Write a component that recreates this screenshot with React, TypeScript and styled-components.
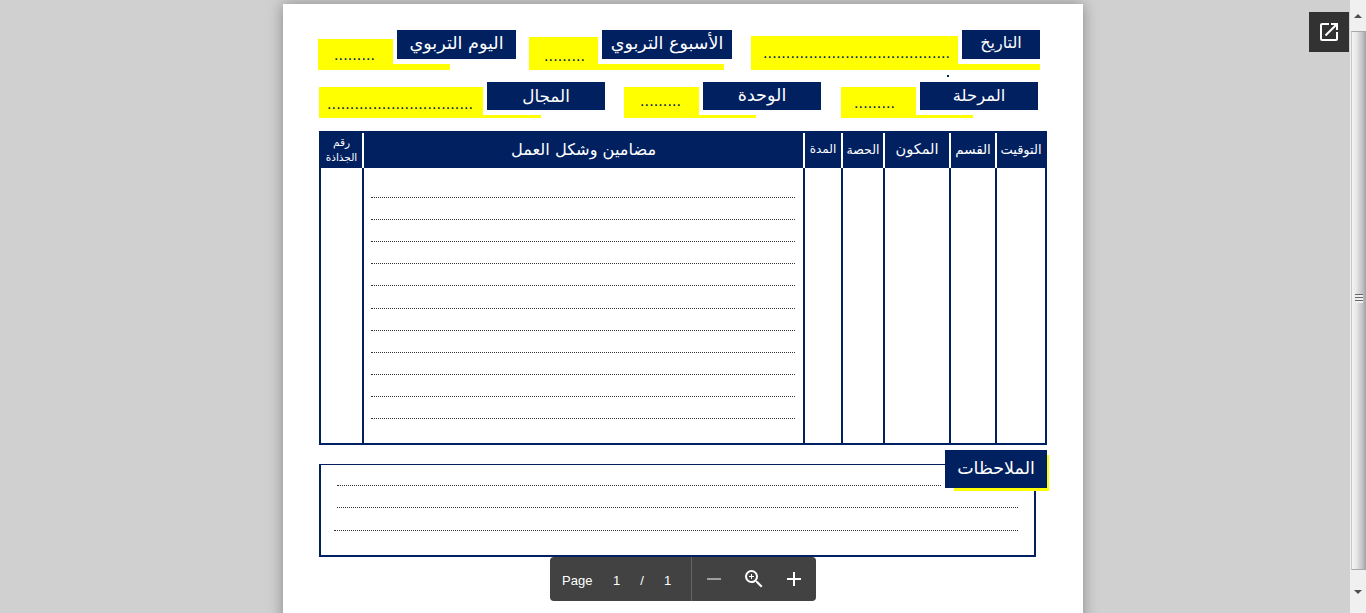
import { createGlobalStyle } from 'styled-components';
import styled from 'styled-components';
import { MdAdd, MdOpenInNew, MdRemove, MdZoomIn } from 'react-icons/md';

const navy = '#002060';
const yellow = '#ffff00';
const arabic = '"DejaVu Sans", sans-serif';

const GlobalStyle = createGlobalStyle`
  html, body {
    margin: 0;
    padding: 0;
    height: 613px;
    overflow: hidden;
    background: #d0d0d0;
  }
`

const Viewer = styled.div`
  position: relative;
  display: flex;
  width: 1366px;
  height: 613px;
  overflow: hidden;
  background: #d0d0d0;
`

const Canvas = styled.main`
  flex: 1;
  display: flex;
  justify-content: center;
  padding: 4px 0 0 16px;
`

const Page = styled.div`
  width: 800px;
  height: 760px;
  padding: 26px 0 0 35px;
  box-sizing: border-box;
  background: #fff;
  box-shadow: 0 0 14px rgba(0, 0, 0, .35);
  flex-shrink: 0;
`

const Row = styled.div<{ $height: number; $left?: number; $top: number }>`
  display: flex;
  height: ${p => p.$height}px;
  margin-top: ${p => p.$top}px;
  margin-left: ${p => p.$left || 0}px;
`

const Field = styled.div<{ $width: number; $after: number }>`
  position: relative;
  display: flex;
  align-items: flex-end;
  flex-shrink: 0;
  width: ${p => p.$width}px;
  margin-right: ${p => p.$after}px;
`

const Fill = styled.div<{ $width: number; $height: number; $inset: number; $lift: number }>`
  display: flex;
  align-items: flex-end;
  box-sizing: border-box;
  flex-shrink: 0;
  width: ${p => p.$width}px;
  height: ${p => p.$height}px;
  padding: 0 0 ${p => p.$lift}px ${p => p.$inset}px;
  background: ${yellow};
`

const Dots = styled.span`
  font: 16px/16px "Liberation Sans", sans-serif;
  letter-spacing: .12px;
  color: ${navy};
  white-space: nowrap;
`

const Side = styled.div`
  flex: 1;
  display: flex;
  flex-direction: column;
  justify-content: space-between;
  height: 100%;
  min-width: 0;
`

const Label = styled.div<{ $width: number; $height: number; $size: number; $raise: number }>`
  display: flex;
  align-items: center;
  justify-content: center;
  flex-shrink: 0;
  box-sizing: border-box;
  width: ${p => p.$width}px;
  height: ${p => p.$height}px;
  margin-left: 4px;
  padding-bottom: ${p => p.$raise}px;
  background: ${navy};
  color: #fff;
  font: ${p => p.$size}px/1 ${arabic};
`

const Strip = styled.div<{ $width: number; $thick: number }>`
  width: ${p => p.$width}px;
  height: ${p => p.$thick}px;
  background: ${yellow};
`

const Speck = styled.i`
  position: absolute;
  left: 196px;
  top: 45px;
  width: 2px;
  height: 2px;
  background: ${navy};
`

const Table = styled.section`
  display: grid;
  grid-template-columns: 43px 441px 38px 42px 66px 46px 48px;
  grid-template-rows: 35px 275px;
  box-sizing: border-box;
  width: 728px;
  height: 314px;
  margin: 13px 0 0 1px;
  border: 2px solid ${navy};
`

const HeadCell = styled.div<{ $size: number; $last?: boolean }>`
  display: flex;
  align-items: center;
  justify-content: center;
  padding-bottom: 1px;
  text-align: center;
  background: ${navy};
  color: #fff;
  font: ${p => p.$size}px/1.45 ${arabic};
  white-space: nowrap;
  border-right: ${p => (p.$last ? 0 : '2px solid #fff')};
  box-sizing: border-box;
`

const BodyCell = styled.div<{ $last?: boolean }>`
  border-right: ${p => (p.$last ? 0 : `2px solid ${navy}`)};
  box-sizing: border-box;
`

const Lines = styled.div`
  padding: 7.4px 8px 0 7px;
`

const DottedLine = styled.div`
  height: 21.2px;
  border-bottom: 1px dotted #333;
`

const Notes = styled.section`
  position: relative;
  isolation: isolate;
  box-sizing: border-box;
  width: 717px;
  height: 93px;
  margin: 19px 0 0 1px;
  border: 2px solid ${navy};
  border-top-width: 1px;
`

const NotesTag = styled.h2`
  position: absolute;
  right: -13px;
  top: -15px;
  display: flex;
  align-items: center;
  justify-content: center;
  width: 102px;
  height: 38px;
  margin: 0;
  background: ${navy};
  color: #fff;
  font: 400 17.5px/1 ${arabic};

  &::before {
    content: '';
    position: absolute;
    z-index: -1;
    left: 9px;
    right: -2px;
    top: 5px;
    bottom: -3px;
    background: ${yellow};
  }
`

const NoteLine = styled.div<{ $left: number; $right: number; $height: number }>`
  height: ${p => p.$height}px;
  margin: 0 ${p => p.$right}px 0 ${p => p.$left}px;
  border-bottom: 1px dotted #333;
`

const Toolbar = styled.nav`
  position: absolute;
  left: 550px;
  top: 557px;
  display: flex;
  align-items: center;
  width: 266px;
  height: 44px;
  background: #424242;
  border-radius: 4px;
  color: #fff;
  font: 13px "Liberation Sans", sans-serif;
`

const PageInfo = styled.div`
  display: grid;
  grid-template-columns: 42px 25px 26px 25px;
  align-items: center;
  justify-items: center;
  box-sizing: border-box;
  width: 142px;
  height: 100%;
  padding: 2px 0 0 12px;
  border-right: 1px solid #666;
  span:first-child { justify-self: start; }
`

const ToolButton = styled.button<{ $dim?: boolean }>`
  display: flex;
  align-items: center;
  justify-content: center;
  width: 40px;
  height: 44px;
  padding: 0;
  border: 0;
  background: none;
  color: ${p => (p.$dim ? '#a0a0a0' : '#fff')};
  font-size: 24px;
`

const ToolIcons = styled.div`
  display: flex;
  padding-left: 2px;
`

const OpenButton = styled.button`
  position: absolute;
  left: 1309px;
  top: 12px;
  display: flex;
  align-items: center;
  justify-content: center;
  width: 40px;
  height: 40px;
  padding: 0;
  border: 0;
  background: #323232;
  color: #fff;
  font-size: 24px;
`

const Scrollbar = styled.aside`
  display: flex;
  flex-direction: column;
  flex-shrink: 0;
  width: 16px;
  height: 100%;
  background: #f0f0f0;
`

const ArrowBox = styled.div<{ $height: number }>`
  display: flex;
  align-items: center;
  justify-content: center;
  height: ${p => p.$height}px;
`

const Arrow = styled.i<{ $down?: boolean }>`
  width: 0;
  height: 0;
  border-left: 4px solid transparent;
  border-right: 4px solid transparent;
  border-${p => (p.$down ? 'top' : 'bottom')}: 4px solid #505050;
`

const Thumb = styled.div`
  flex: 1;
  display: flex;
  align-items: center;
  justify-content: center;
  box-sizing: border-box;
  margin-left: 1px;
  border: 1px solid #a8a8a8;
  border-left-color: #c8c8c8;
  background: linear-gradient(90deg, #f4f4f4 0%, #e6e6e6 35%, #bcbcc4 85%, #a8a8a8 100%);
`

const Grip = styled.i`
  width: 8px;
  height: 9px;
  margin-bottom: 5px;
  background: repeating-linear-gradient(180deg, #666 0 1px, #eee 1px 3px);
`

const topRow = [
  { width: 198, after: 13, fill: 75, fillHeight: 31, inset: 16, lift: 7, dots: 9, label: 'اليوم التربوي', size: 17.6, raise: 2, labelWidth: 119, strip: 57 },
  { width: 204, after: 18, fill: 69, fillHeight: 33, inset: 15, lift: 6, dots: 9, label: 'الأسبوع التربوي', size: 17.5, raise: 2, labelWidth: 130, strip: 126 },
  { width: 290, after: 0, fill: 207, fillHeight: 34, inset: 12, lift: 9, dots: 41, label: 'التاريخ', size: 16, raise: 4, labelWidth: 78, strip: 82 },
]

const bottomRow = [
  { width: 287, after: 18, fill: 164, fillHeight: 31, inset: 8, lift: 6, dots: 32, label: 'المجال', size: 16.8, raise: 0, labelWidth: 118, strip: 58 },
  { width: 198, after: 19, fill: 75, fillHeight: 31, inset: 16, lift: 9, dots: 9, label: 'الوحدة', size: 17.6, raise: 0, labelWidth: 118, strip: 57 },
  { width: 197, after: 0, fill: 75, fillHeight: 31, inset: 13, lift: 7, dots: 9, label: 'المرحلة', size: 16.4, raise: 0, labelWidth: 118, strip: 57 },
]

const heads = [
  { text: <>رقم<br />الجذاذة</>, size: 10.5 },
  { text: 'مضامين وشكل العمل', size: 16.2 },
  { text: 'المدة', size: 12 },
  { text: 'الحصة', size: 12.5 },
  { text: 'المكون', size: 14.5 },
  { text: 'القسم', size: 13.5 },
  { text: 'التوقيت', size: 13 },
]

type FieldData = typeof topRow[number]

function HeaderField({ field, labelHeight, thick, children }: { field: FieldData; labelHeight: number; thick: number; children?: React.ReactNode }) {
  return (
    <Field $width={field.width} $after={field.after}>
      <Fill $width={field.fill} $height={field.fillHeight} $inset={field.inset} $lift={field.lift}>
        <Dots>{'.'.repeat(field.dots)}</Dots>
      </Fill>
      <Side>
        <Label $width={field.labelWidth} $height={labelHeight} $size={field.size} $raise={field.raise} dir="rtl">{field.label}</Label>
        <Strip $width={field.strip} $thick={thick} />
      </Side>
      {children}
    </Field>
  )
}

export default function App() {
  return (
    <Viewer>
      <GlobalStyle />
      <Canvas>
        <Page>
          <Row $height={40} $top={0}>
            {topRow.map((f, i) => (
              <HeaderField key={f.label} field={f} labelHeight={29} thick={6.5}>
                {i === 2 && <Speck />}
              </HeaderField>
            ))}
          </Row>
          <Row $height={36} $top={12} $left={1}>
            {bottomRow.map(f => (
              <HeaderField key={f.label} field={f} labelHeight={28} thick={3.5} />
            ))}
          </Row>
          <Table>
            {heads.map((h, i) => (
              <HeadCell key={i} $size={h.size} $last={i === heads.length - 1} dir="rtl">{h.text}</HeadCell>
            ))}
            {heads.map((_, i) => (
              <BodyCell key={i} $last={i === heads.length - 1}>
                {i === 1 && (
                  <Lines>
                    {Array.from({ length: 11 }, (_, n) => <DottedLine key={n} />)}
                  </Lines>
                )}
              </BodyCell>
            ))}
          </Table>
          <Notes>
            <NotesTag dir="rtl">الملاحظات</NotesTag>
            <NoteLine $left={16} $right={93} $height={20} />
            <NoteLine $left={16} $right={16} $height={21} />
            <NoteLine $left={13} $right={16} $height={22} />
          </Notes>
        </Page>
      </Canvas>
      <Scrollbar>
        <ArrowBox $height={31}><Arrow /></ArrowBox>
        <Thumb><Grip /></Thumb>
        <ArrowBox $height={43}><Arrow $down /></ArrowBox>
      </Scrollbar>
      <OpenButton aria-label="Open in new tab"><MdOpenInNew /></OpenButton>
      <Toolbar>
        <PageInfo>
          <span>Page</span>
          <span>1</span>
          <span>/</span>
          <span>1</span>
        </PageInfo>
        <ToolIcons>
          <ToolButton $dim aria-label="Zoom out"><MdRemove /></ToolButton>
          <ToolButton aria-label="Fit to page"><MdZoomIn /></ToolButton>
          <ToolButton aria-label="Zoom in"><MdAdd /></ToolButton>
        </ToolIcons>
      </Toolbar>
    </Viewer>
  )
}
